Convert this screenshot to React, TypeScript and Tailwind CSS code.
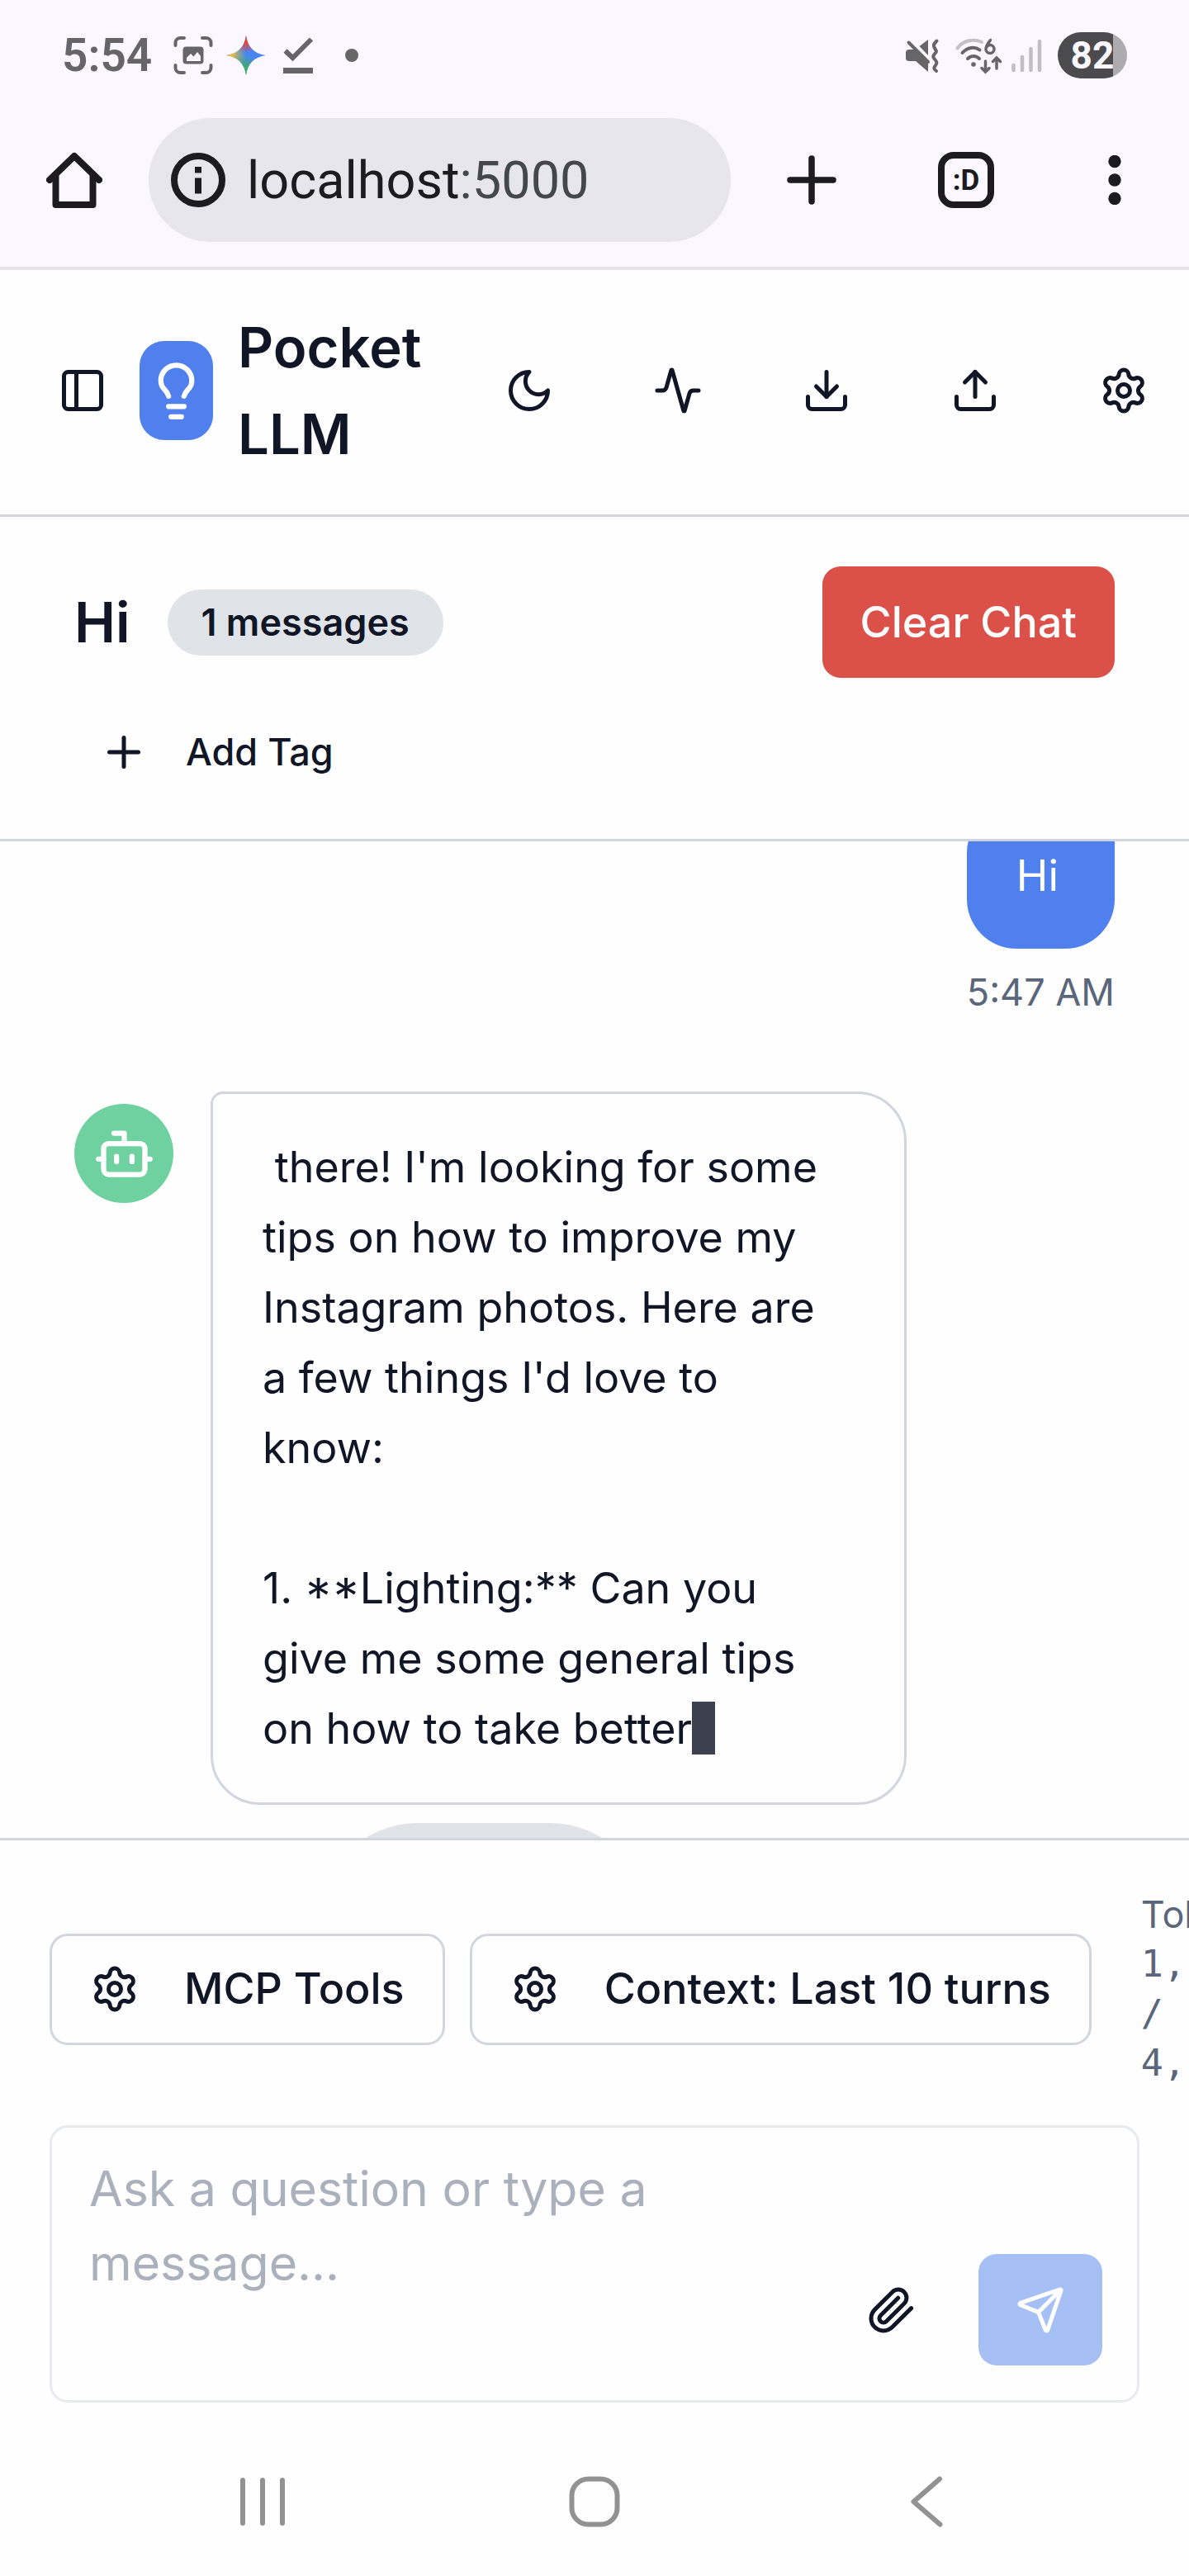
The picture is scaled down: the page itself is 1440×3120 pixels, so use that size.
import { useLayoutEffect, useRef, type ReactNode } from "react";
import { Activity, Bot, Download, Lightbulb, PanelLeft, Plus, Send, Settings, Upload } from "lucide-react";

const ICON = "size-[60px] shrink-0";

function MoonIcon() {
  return (
    <svg viewBox="0 0 24 24" className={ICON} fill="none" stroke="currentColor" strokeWidth="2" strokeLinecap="round" strokeLinejoin="round">
      <path d="M12 3a6 6 0 0 0 9 9 9 9 0 1 1-9-9Z" />
    </svg>
  );
}

function PaperclipIcon() {
  return (
    <svg viewBox="0 0 24 24" className={ICON} fill="none" stroke="currentColor" strokeWidth="2" strokeLinecap="round" strokeLinejoin="round">
      <path d="m21.44 11.05-9.19 9.19a6 6 0 0 1-8.49-8.49l8.57-8.57A4 4 0 1 1 18 8.84l-8.59 8.57a2 2 0 0 1-2.83-2.83l8.49-8.48" />
    </svg>
  );
}

function IconButton({ label, children }: { label: string; children: ReactNode }) {
  return (
    <button aria-label={label} className="flex h-[135px] w-[150px] shrink-0 items-center justify-center rounded-[22px]">
      {children}
    </button>
  );
}

function StatusBar() {
  return (
    <div className="flex h-[134px] items-center justify-between pr-[75px] pl-[75px] font-['Roboto',sans-serif] text-[#666668]">
      <div className="flex items-center gap-4">
        <span className="mr-[10px] text-[55px] leading-none font-semibold">5:54</span>
        <svg viewBox="0 0 48 48" className="size-12" fill="none" stroke="currentColor" strokeWidth="4" strokeLinecap="round">
          <path d="M2.500 12V9a6 6 0 0 1 6-6H13M35 3h4.500a6 6 0 0 1 6 6v3M45.500 36v3a6 6 0 0 1-6 6H35M13 45H8.500a6 6 0 0 1-6-6v-3" />
          <rect x="11.500" y="13.500" width="25" height="21" rx="4" fill="currentColor" stroke="none" />
          <path d="M16 31v-4l5-5 3.500 3.500L29 20l4 5v6z" fill="#faf7ff" stroke="none" />
        </svg>
        <svg viewBox="0 0 48 48" className="size-12">
          <defs>
            <radialGradient id="red" cx="24" cy="0" r="21" gradientUnits="userSpaceOnUse">
              <stop offset="0.4" stopColor="#ea4335" />
              <stop offset="1" stopColor="#ea4335" stopOpacity="0" />
            </radialGradient>
            <radialGradient id="yellow" cx="0" cy="22" r="24" gradientUnits="userSpaceOnUse">
              <stop offset="0.3" stopColor="#f5bb3a" />
              <stop offset="1" stopColor="#a3c44a" stopOpacity="0" />
            </radialGradient>
            <radialGradient id="green" cx="20" cy="46" r="24" gradientUnits="userSpaceOnUse">
              <stop offset="0.3" stopColor="#3fae62" />
              <stop offset="1" stopColor="#3fae62" stopOpacity="0" />
            </radialGradient>
            <path id="spark" d="M24 0c1.800 14 10 22 24 24-14 2-22.200 10-24 24C22.200 34 14 26 0 24 14 22 22.200 14 24 0Z" />
          </defs>
          <use href="#spark" fill="#4a85f6" />
          <use href="#spark" fill="url(#green)" />
          <use href="#spark" fill="url(#yellow)" />
          <use href="#spark" fill="url(#red)" />
        </svg>
        <svg viewBox="0 0 48 48" className="size-12" fill="none" stroke="currentColor">
          <path d="M7.500 18.500 16.500 27 39 4.500" strokeWidth="6" />
          <path d="M5 42.500h36" strokeWidth="7" />
        </svg>
        <svg viewBox="0 0 48 48" className="size-12">
          <circle cx="24" cy="24" r="8" fill="currentColor" />
        </svg>
      </div>
      <div className="flex items-center gap-3">
        <svg viewBox="0 0 48 48" className="size-12" fill="currentColor">
          <path d="M4 17h8L27 32v12L12 31H4a4 4 0 0 1-4-4v-6a4 4 0 0 1 4-4ZM27 5v19L16.500 13Z" />
          <path d="M3.500 8.500 27 32" stroke="currentColor" strokeWidth="4" strokeLinecap="round" />
          <path d="M37.500 6.500c-6 6-3.500 6.500-.5 12.500.5 2-6 5-3 8.500s4.500 5 2.500 8-4 4 .5 7.500" fill="none" stroke="currentColor" strokeWidth="4" strokeLinecap="round" />
        </svg>
        <svg viewBox="0 0 56 48" className="h-12 w-14" fill="none" stroke="currentColor" strokeWidth="4" strokeLinecap="round">
          <path d="M2.500 15.500C10 5 23 4 32 8" stroke="#c2c1c6" />
          <path d="M8.500 21c6-7 15-8 21-3.500" />
          <path d="M15 28c4-4 10-4 14 0" />
          <circle cx="22" cy="35" r="2.800" fill="currentColor" stroke="none" />
          <path d="M42.500 5.500c-3 4-5.500 7-5.500 11a5 5 0 1 0 5-5c-2 0-3.500 1-4.500 3" strokeWidth="3.500" />
          <path d="M36.500 31v12M32 39.500l4.500 4.500 4.500-4.500M50 40V28M45.500 31.500 50 27l4.500 4.500" strokeWidth="3.500" />
        </svg>
        <svg viewBox="0 0 44 48" className="h-12 w-11" fill="none" stroke="#bfbec4" strokeWidth="4.500" strokeLinecap="round">
          <path d="M2.500 36v6M13 26v16M23.500 16v26M34 7v35" />
        </svg>
        <div className="flex h-[56px] w-[84px] items-center justify-center overflow-hidden rounded-full bg-linear-to-r from-[#4b4b4d] from-80% to-[#adabb0] to-80% text-[46px] leading-none font-bold text-[#faf7ff]">
          82
        </div>
      </div>
    </div>
  );
}

function BrowserBar() {
  return (
    <div className="flex items-center border-b-4 border-[#e4e2e9] pt-[9px] pr-[82px] pb-[30px] pl-[56px] text-[#1b1b20]">
      <button aria-label="Home">
        <svg viewBox="0 0 68 68" className="size-[68px]" fill="none" stroke="currentColor" strokeWidth="8" strokeLinecap="round" strokeLinejoin="round">
          <path d="M4 34 34 5l30 29" />
          <path d="M11.500 29v35h45V29" />
        </svg>
      </button>
      <button className="ml-[56px] flex h-[150px] flex-1 items-center rounded-full bg-[#e7e6ec] pl-[27px] text-left">
        <svg viewBox="0 0 66 66" className="size-[66px] shrink-0" fill="none" stroke="currentColor" strokeWidth="8">
          <circle cx="33" cy="33" r="29" />
          <path d="M33 30.500v19M33 17v7.500" />
        </svg>
        <span className="ml-[26px] font-['Roboto',sans-serif] text-[63px] leading-none">
          localhost<span className="text-[#44474b]">:5000</span>
        </span>
      </button>
      <button aria-label="New tab" className="ml-[68px]">
        <svg viewBox="0 0 60 60" className="size-[60px]" stroke="currentColor" strokeWidth="7.500" strokeLinecap="round">
          <path d="M30 4v52M4 30h52" />
        </svg>
      </button>
      <button aria-label="Open tabs" className="ml-[123px] flex size-[68px] items-center justify-center rounded-[19px] border-8 border-current font-['Roboto',sans-serif] text-[35px] leading-none font-bold">
        :D
      </button>
      <button aria-label="More options" className="ml-[138px]">
        <svg viewBox="0 0 16 60" className="h-[60px] w-4" fill="currentColor">
          <circle cx="8" cy="7.500" r="7.700" />
          <circle cx="8" cy="30" r="7.700" />
          <circle cx="8" cy="52.500" r="7.700" />
        </svg>
      </button>
    </div>
  );
}

function AppHeader() {
  return (
    <header className="flex h-[299px] shrink-0 items-center justify-between border-b-[3px] border-[#d1d6de] pr-1 pb-1 pl-[60px]">
      <div className="flex items-center gap-[30px]">
        <button aria-label="Toggle sidebar" className="flex h-[135px] w-[79px] items-center justify-center">
          <PanelLeft className={ICON} />
        </button>
        <div className="flex h-[120px] w-[89px] items-center justify-center rounded-[30px] bg-[#4f80ed] text-white">
          <Lightbulb className="size-[75px] shrink-0" />
        </div>
        <h1 className="w-min text-[67px] leading-[105px] font-semibold">Pocket LLM</h1>
      </div>
      <div className="flex items-center gap-[30px]">
        <IconButton label="Dark mode"><MoonIcon /></IconButton>
        <IconButton label="Activity"><Activity className={ICON} /></IconButton>
        <IconButton label="Download"><Download className={ICON} /></IconButton>
        <IconButton label="Upload"><Upload className={ICON} /></IconButton>
        <IconButton label="Settings"><Settings className={ICON} /></IconButton>
      </div>
    </header>
  );
}

function ChatHeader() {
  return (
    <section className="shrink-0 border-b-[3px] border-[#d1d6de] px-[90px] py-[60px]">
      <div className="flex items-center justify-between">
        <div className="flex items-center gap-[45px]">
          <h2 className="text-[67px] leading-[105px] font-semibold">Hi</h2>
          <span className="rounded-full bg-[#e0e3e8] px-[41px] py-[10px] text-[45px] leading-[60px] font-semibold">1 messages</span>
        </div>
        <button className="h-[135px] rounded-[22px] bg-[#db5149] px-[46px] text-[52px] font-medium text-white">Clear Chat</button>
      </div>
      <button className="mt-[45px] flex h-[90px] items-center gap-[45px] px-[30px] text-[45px] font-medium">
        <Plus className={ICON} />
        Add Tag
      </button>
    </section>
  );
}

function Conversation() {
  const pane = useRef<HTMLElement>(null);
  useLayoutEffect(() => {
    if (pane.current) pane.current.scrollTop = 136;
  }, []);
  return (
    <main ref={pane} className="min-h-0 flex-1 overflow-hidden px-[90px] pt-[90px]">
      <div className="ml-auto flex w-fit flex-col">
        <div className="rounded-[60px] rounded-tr-[15px] bg-[#4f80ed] px-[60px] pt-[45px] pb-[46px] text-[52px] leading-[85px] text-white">Hi</div>
        <time className="mt-[23px] text-[45px] leading-[60px] text-[#5a667b]">5:47 AM</time>
      </div>
      <div className="mt-[90px] flex gap-[45px]">
        <div className="mt-[15px] flex size-[120px] shrink-0 items-center justify-center rounded-full bg-[#6ed19f] text-white">
          <Bot className="size-[75px]" />
        </div>
        <div className="max-w-[843px]">
          <div className="rounded-[60px] rounded-tl-[15px] border-[3px] border-[#d1d6de] pt-[46px] pr-[75px] pb-[47px] pl-[60px] text-[52px] leading-[85px] whitespace-pre-wrap">
            {" there! I'm looking for some tips on how to improve my Instagram photos. Here are a few things I'd love to know:\n\n1. "}
            <span className="[font-feature-settings:'case']">**</span>
            {"Lighting:** Can you give me some general tips on how to take better"}
            <span className="inline-block h-16 w-7 bg-[#3c4150] align-[-13px] leading-none" />
          </div>
          <div className="mt-[22px] ml-[131px] h-[240px] w-[400px] rounded-full bg-[#e0e3e8]" />
        </div>
      </div>
    </main>
  );
}

function Composer() {
  return (
    <footer className="shrink-0 border-t-[3px] border-[#d1d6de] px-[60px] pt-[60px] pb-[30px]">
      <div className="-mr-[60px] flex h-[240px] items-center overflow-hidden">
        <button className="flex h-[135px] shrink-0 items-center gap-[54px] rounded-[22px] border-[3px] border-[#d1d6de] px-[46px] text-[52px] font-medium whitespace-nowrap">
          <Settings className={ICON} />
          MCP Tools
        </button>
        <button className="ml-[30px] flex h-[135px] shrink-0 items-center gap-[54px] rounded-[22px] border-[3px] border-[#d1d6de] px-[46px] text-[52px] font-medium whitespace-nowrap">
          <Settings className={ICON} />
          Context: Last 10 turns
        </button>
        <div className="ml-[60px] w-0 text-[45px] leading-[60px] text-[#5a667b]">
          <div>Tokens:</div>
          <div className="font-['DejaVu_Sans_Mono',monospace]">
            <div>1,</div>
            <div>/</div>
            <div>4,</div>
          </div>
        </div>
      </div>
      <div className="relative mt-[45px]">
        <textarea
          aria-label="Message"
          placeholder="Ask a question or type a message..."
          className="block h-[336px] w-full resize-none overflow-hidden rounded-[22px] border-[3px] border-[#e8eaee] bg-transparent py-[29px] pr-[330px] pl-[45px] text-[59px] leading-[90px] outline-none placeholder:text-[#abb1bc]"
        />
        <div className="absolute right-[45px] bottom-[45px] flex gap-[30px]">
          <IconButton label="Attach file"><PaperclipIcon /></IconButton>
          <button aria-label="Send" className="flex h-[135px] w-[150px] items-center justify-center rounded-[22px] bg-[#a6bff5] text-white">
            <Send className={ICON} />
          </button>
        </div>
      </div>
    </footer>
  );
}

function SystemNav() {
  return (
    <nav className="grid h-[180px] shrink-0 grid-cols-3 place-items-center px-[117px] text-[#929292]">
      <button aria-label="Recent apps">
        <svg viewBox="0 0 62 62" className="size-[62px]" stroke="currentColor" strokeWidth="6" strokeLinecap="round">
          <path d="M7 5v52M31 5v52M55 5v52" />
        </svg>
      </button>
      <button aria-label="Home screen">
        <svg viewBox="0 0 62 62" className="size-[62px]" fill="none" stroke="currentColor" strokeWidth="6">
          <rect x="3.500" y="3.500" width="55" height="55" rx="20" />
        </svg>
      </button>
      <button aria-label="Back">
        <svg viewBox="0 0 62 62" className="size-[62px]" fill="none" stroke="currentColor" strokeWidth="6" strokeLinecap="round" strokeLinejoin="round">
          <path d="M47 3.500 15.500 31 47.500 58.500" />
        </svg>
      </button>
    </nav>
  );
}

export default function App() {
  return (
    <div className="flex h-screen flex-col overflow-hidden bg-[#fefefe] font-['Inter',sans-serif] text-[#111627]">
      <div className="shrink-0 bg-[#faf7ff]">
        <StatusBar />
        <BrowserBar />
      </div>
      <AppHeader />
      <ChatHeader />
      <Conversation />
      <Composer />
      <SystemNav />
    </div>
  );
}
